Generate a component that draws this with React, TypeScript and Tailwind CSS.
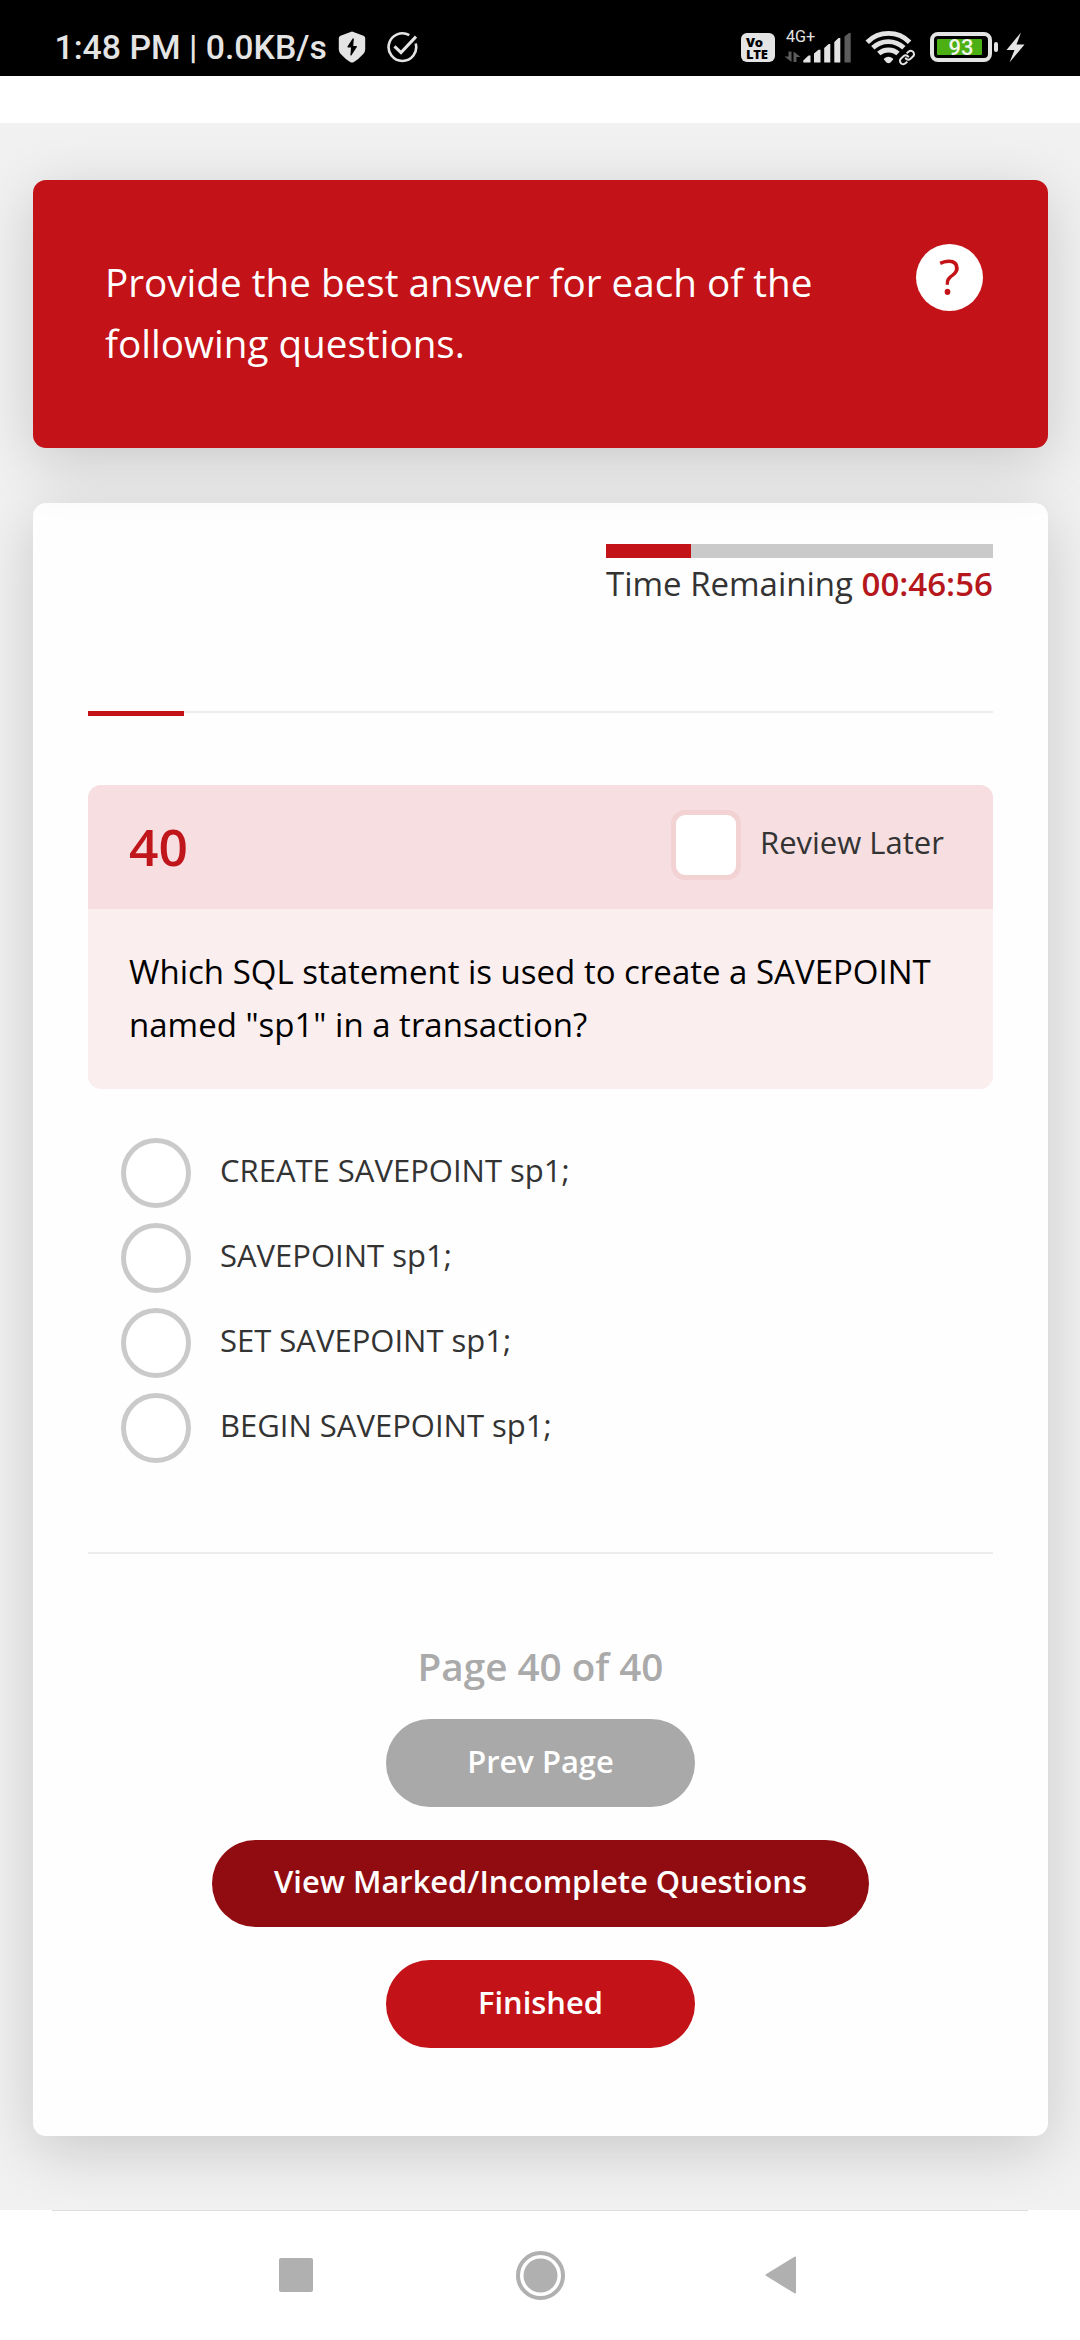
import React from "react";

const OPTIONS = [
  "CREATE SAVEPOINT sp1;",
  "SAVEPOINT sp1;",
  "SET SAVEPOINT sp1;",
  "BEGIN SAVEPOINT sp1;",
];

function StatusLeft() {
  return (
    <div className="flex h-[76px] items-start pl-[54.500px] text-[#e4e4e4]">
      <span className="w-[283.500px] whitespace-nowrap font-['Roboto',sans-serif] text-[33.8px] leading-[96px] font-medium">
        1:48 PM | 0.0KB/s
      </span>
      <svg className="mt-[31px] h-8 w-[28px]" viewBox="0 0 28 32">
        <path
          d="M14 0.500L25.500 4.800Q27.200 5.500 27.200 7V18.500Q27 21 25.500 22.800Q20.500 28.500 15.500 31.200Q14 32 12.500 31.200Q7.500 28.500 2.500 22.800Q1 21 0.800 18.500V7Q0.800 5.500 2.500 4.800Z"
          fill="currentColor"
        />
        <path
          d="M15.200 7.800L10 15.800H13.700L13 24L18.300 15.600H14.600Z"
          fill="#000"
          stroke="#000"
          strokeWidth="1.200"
          strokeLinejoin="round"
        />
      </svg>
      <svg className="mt-[31px] ml-5 h-8 w-8" viewBox="0 0 32 32" fill="none" stroke="currentColor" strokeWidth="2.600">
        <path d="M23.300 4.200A13.800 13.800 0 1 0 29.700 12.500" />
        <path d="M8.500 15.300L15 21.600L30 5.600" strokeWidth="3" />
      </svg>
    </div>
  );
}

function StatusRight() {
  return (
    <div className="flex h-[76px] items-start pr-[55px] text-[#e4e4e4]">
      <div className="mt-[33px] flex h-[29px] w-[34px] flex-col rounded-[6px] bg-[#e4e4e4] pl-[5px] pt-[3px] font-['Open_Sans',sans-serif] text-black">
        <span className="text-[13px] leading-[12px] font-extrabold tracking-[-0.2px]">Vo</span>
        <span className="text-[13px] leading-[12px] font-extrabold tracking-[-0.2px]">LTE</span>
      </div>
      <svg className="ml-[9px] mt-[28px] h-[36px] w-[68px]" viewBox="0 0 68 36">
        <text x="2" y="14" fontFamily="Roboto" fontSize="16.2" fill="#e4e4e4">
          4G+
        </text>
        <g fill="#5c5c5c">
          <path d="M4.500 23.500H7.500V34L0.500 28.500H4.500Z" />
          <path d="M9.500 34V23.500L16.500 29H12.500V34Z" />
        </g>
        <g fill="#e4e4e4">
          <path d="M19.300 34.500V32.500L24.500 27.500H26.500V34.500Z" />
          <path d="M30 34.500V25.500L34.500 21.800H36.500V34.500Z" />
          <path d="M40.200 34.500V20L44.700 16H46.300V34.500Z" />
          <path d="M50.300 34.500V14L54.500 10H56.300V34.500Z" />
        </g>
        <path d="M60.500 34.500V8.500L65 5H66.700V34.500Z" fill="#5c5c5c" />
      </svg>
      <svg className="ml-[13px] mt-[29px] h-[38px] w-[52px]" viewBox="0 0 52 38">
        <g fill="none" stroke="currentColor" strokeWidth="4.800">
          <path d="M2.200 13.200C14 1.500 33 1.500 44.600 13.200" />
          <path d="M7.800 18.800C16.500 10.500 30 10.500 38.900 18.800" />
          <path d="M13.800 24.600C19 19.800 28 19.800 33 24.600" />
        </g>
        <path d="M18.800 29.800Q23.500 25.800 28.200 29.800Q28.500 30.600 25.500 33.400Q23.500 35 21.500 33.400Q18.500 30.600 18.800 29.800Z" fill="currentColor" />
        <g transform="translate(42 28.500) rotate(-42)" fill="none">
          <rect x="-9.500" y="-4.500" width="19" height="9" rx="4.500" fill="#000" stroke="#000" strokeWidth="3" />
          <g stroke="currentColor" strokeWidth="2">
            <path d="M1.500 1V-0.500A3.300 3.300 0 0 0 -1.800 -3.300H-5A3.300 3.300 0 0 0 -5 3.300H-2.500" />
            <path d="M-1.500 -1V0.500A3.300 3.300 0 0 0 1.800 3.300H5A3.300 3.300 0 0 0 5 -3.300H2.500" />
          </g>
        </g>
      </svg>
      <div className="ml-[13px] mt-8 flex h-[30px] w-[62px] rounded-[8px] border-4 border-[#e4e4e4] p-[3px]">
        <div className="flex h-4 w-[45px] items-center justify-center rounded-[1px] bg-[#4caf14] pt-[2px] pl-[3px] font-['Roboto',sans-serif] text-[22px] leading-none font-medium text-[#f2f6ee]">
          93
        </div>
      </div>
      <span className="ml-[2px] mt-[42px] h-[10px] w-1 rounded-[2px] bg-[#e4e4e4]" />
      <svg className="ml-2 mt-8 h-[31px] w-[19px]" viewBox="0 0 19 31">
        <path d="M15 0.500L0.500 18H8.500L3.500 30.500L18.500 12.500H10.500Z" fill="currentColor" />
      </svg>
    </div>
  );
}

function Timer() {
  return (
    <div className="mt-[41px] ml-[573px] w-[387px]">
      <div className="h-[14px] bg-[#cacaca]">
        <div className="h-full w-[85px] bg-[#c31218]" />
      </div>
      <p className="whitespace-nowrap text-[33px] leading-[52px] text-[#333]">
        Time Remaining <span className="font-semibold text-[#b5171c]">00:46:56</span>
      </p>
    </div>
  );
}

function Question() {
  return (
    <section className="mt-[69px] h-[304px] overflow-hidden rounded-[13px] bg-[#faeeee]">
      <header className="flex h-[124px] items-start bg-[#f6dee1] pl-[41px]">
        <h2 className="w-[542px] text-[51.5px] leading-[122px] font-semibold text-[#c0151b]">40</h2>
        <span className="mt-[25px] h-[70px] w-[70px] rounded-[14px] border-[5px] border-[#f3d2d4] bg-white" />
        <span className="ml-[19px] text-[31px] leading-[114px] text-[#333]">Review Later</span>
      </header>
      <p className="pt-9 pl-[41px] text-[33px] leading-[53px] text-black">
        Which SQL statement is used to create a SAVEPOINT
        <br />
        named "sp1" in a transaction?
      </p>
    </section>
  );
}

export default function App() {
  return (
    <div className="flex h-[2340px] w-[1080px] flex-col overflow-hidden bg-white font-['Open_Sans',sans-serif]">
      <div className="flex h-[76px] shrink-0 justify-between bg-black">
        <StatusLeft />
        <StatusRight />
      </div>
      <div className="h-[47px] shrink-0 bg-white" />
      <main className="h-[2087px] shrink-0 overflow-hidden bg-[#f1f1f1] pt-[57px] pr-8 pl-[33px]">
        <section className="relative z-10 flex h-[268px] items-start rounded-[13px] bg-[#c31218] pl-[72px] shadow-[0_14px_60px_rgba(0,0,0,0.17)]">
          <p className="w-[811px] pt-[72px] text-[38.650px] leading-[61px] text-white">
            Provide the best answer for each of the
            <br />
            following questions.
          </p>
          <span className="mt-16 flex h-[67px] w-[67px] justify-center rounded-full bg-white text-[49.5px] leading-[65px] text-[#c31218]">
            ?
          </span>
        </section>

        <section className="mt-[55px] flex h-[1633px] flex-col rounded-[13px] bg-[#fefefe] shadow-[0_14px_60px_rgba(0,0,0,0.17)]">
          <Timer />
          <div className="mr-[55px] ml-[55px]">
            <div className="mt-[101px] h-[5px]">
              <div className="h-[2px] bg-[#ededed]">
                <div className="h-[5px] w-24 bg-[#c31218]" />
              </div>
            </div>
            <Question />
            <ul className="mt-[49px] flex flex-col gap-[15px] pl-[33px]">
              {OPTIONS.map((label) => (
                <li key={label} className="flex h-[70px] items-start">
                  <span className="h-[70px] w-[70px] rounded-full border-[5px] border-[#cacaca] bg-white" />
                  <span className="ml-[29px] text-[31px] leading-[64px] text-[#333]">{label}</span>
                </li>
              ))}
            </ul>
            <div className="mt-[89px] h-[2px] bg-[#ededed]" />
            <div className="mt-[82px] flex flex-col items-center font-semibold text-white">
              <p className="text-[38.650px] leading-[60px] text-[#aaa]">Page 40 of 40</p>
              <button className="mt-[23px] flex h-[88px] w-[309px] justify-center rounded-full bg-[#a9a9a9] text-[30.9px] leading-[84px]">
                Prev Page
              </button>
              <button className="mt-[33px] flex h-[87px] w-[657px] justify-center rounded-full bg-[#910c11] text-[30.9px] leading-[82px]">
                View Marked/Incomplete Questions
              </button>
              <button className="mt-[33px] flex h-[88px] w-[309px] justify-center rounded-full bg-[#c31218] text-[30.9px] leading-[84px]">
                Finished
              </button>
            </div>
          </div>
        </section>
      </main>
      <nav className="flex h-[130px] shrink-0 flex-col">
        <div className="mx-[52px] h-px bg-[#dfdfdf]" />
        <div className="flex h-[129px] items-start pl-[279px]">
          <span className="mt-[47px] h-[34px] w-[34px] rounded-[2px] bg-[#b0b0b0]" />
          <svg className="mt-[39px] ml-[202px] h-[51px] w-[51px]" viewBox="0 0 51 51">
            <circle cx="25.500" cy="25.500" r="22.500" fill="none" stroke="#b0b0b0" strokeWidth="4" />
            <circle cx="25.500" cy="25.500" r="17" fill="#b0b0b0" />
          </svg>
          <svg className="mt-[44px] ml-[198px] h-10 w-[34px]" viewBox="0 0 34 40">
            <path d="M31 2.500V37.500L2.500 20Z" fill="#b0b0b0" stroke="#b0b0b0" strokeWidth="2" strokeLinejoin="round" />
          </svg>
        </div>
      </nav>
    </div>
  );
}
